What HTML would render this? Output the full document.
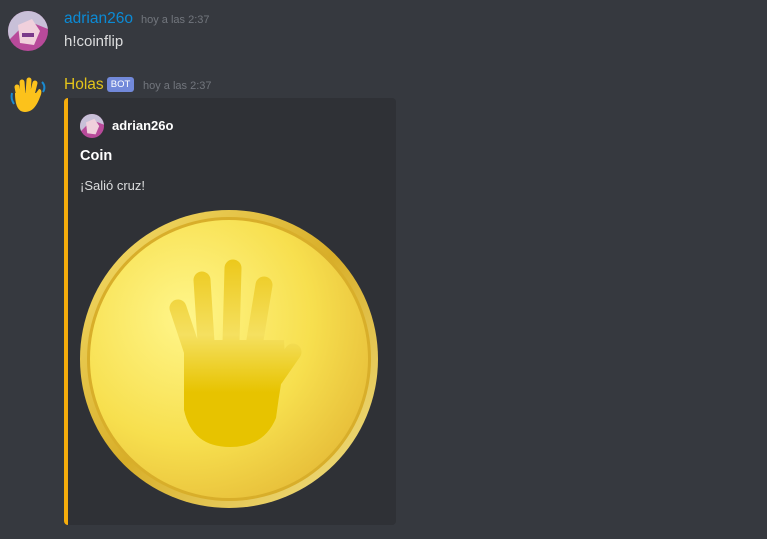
<!DOCTYPE html>
<html><head><meta charset="utf-8"><style>
body{margin:0;width:767px;height:539px;background:#36393f;font-family:"Liberation Sans","DejaVu Sans",sans-serif;position:relative;overflow:hidden}
.a{position:absolute;white-space:nowrap}
</style></head><body>
<svg class="a" style="left:8px;top:11px" width="40" height="40" viewBox="0 0 40 40">
<defs><clipPath id="c"><circle cx="20" cy="20" r="20"/></clipPath></defs>
<g clip-path="url(#c)"><rect width="40" height="40" fill="#b84a9a"/><path d="M0 0H40V18L20 10 8 22 0 30Z" fill="#c8c0d8"/><path d="M10 14 24 8 32 20 26 34 12 32Z" fill="#f0d0dc"/><path d="M14 22h12v4H14z" fill="#7a3a8a"/><path d="M0 30 10 40H0Z" fill="#8a2a7a"/></g></svg>
<div class="a" style="left:64px;top:10px;font-size:15.5px;color:#0b8bd6">adrian26o</div>
<div class="a" style="left:141px;top:14px;font-size:11px;color:#72767d">hoy a las 2:37</div>
<div class="a" style="left:64px;top:33px;font-size:15px;color:#dcddde">h!coinflip</div>

<svg class="a" style="left:9px;top:77px" width="40" height="38" viewBox="0 0 40 38">
<g fill="#fcc21b" stroke="#fcc21b" stroke-linecap="round">
<path d="M10 20 L8 10 M14 18 L13 5 M19 17 L20 3 M23 18 L26 6" stroke-width="5" fill="none"/>
<path d="M6 16 L27 16 L30 12 C33 12 33 16 31 20 C28 28 24 35 16 35 C9 35 6 28 6 16Z" stroke="none"/>
</g>
<path d="M3 16 C2 20 3 24 5 27" stroke="#1a8ad0" stroke-width="2" fill="none"/>
<path d="M33 5 C36 8 36 12 34 15" stroke="#1a8ad0" stroke-width="2" fill="none"/></svg>
<div class="a" style="left:64px;top:76px;font-size:15.5px;color:#e3c41a">Holas</div>
<div class="a" style="left:107px;top:77px;width:27px;height:15px;background:#7289da;border-radius:3px;color:#fff;font-size:9.5px;line-height:15px;text-align:center">BOT</div>
<div class="a" style="left:143px;top:80px;font-size:11px;color:#72767d">hoy a las 2:37</div>

<div class="a" style="left:64px;top:98px;width:332px;height:427px;background:#2f3136;border-left:4px solid #f6ad0c;border-radius:4px;box-sizing:border-box"></div>
<svg class="a" style="left:80px;top:114px" width="24" height="24" viewBox="0 0 40 40">
<g clip-path="url(#c)"><rect width="40" height="40" fill="#b84a9a"/><path d="M0 0H40V18L20 10 8 22 0 30Z" fill="#c8c0d8"/><path d="M10 14 24 8 32 20 26 34 12 32Z" fill="#f0d0dc"/></g></svg>
<div class="a" style="left:112px;top:118px;font-size:13px;font-weight:bold;color:#fff">adrian26o</div>
<div class="a" style="left:80px;top:148px;font-size:14.5px;font-weight:bold;color:#fff">Coin</div>
<div class="a" style="left:80px;top:178px;font-size:13px;color:#dcddde">¡Salió cruz!</div>

<svg class="a" style="left:0;top:0" width="767" height="539">
<defs>
<radialGradient id="g1" cx="0.35" cy="0.35" r="0.75"><stop offset="0" stop-color="#fff68a"/><stop offset="0.6" stop-color="#f7df4e"/><stop offset="1" stop-color="#e6bc38"/></radialGradient>
<linearGradient id="g2" x1="0" y1="0" x2="1" y2="1"><stop offset="0" stop-color="#f6e070"/><stop offset="0.5" stop-color="#d8ae28"/><stop offset="1" stop-color="#f3e48a"/></linearGradient>
<linearGradient id="h" gradientUnits="userSpaceOnUse" x1="0" y1="258" x2="0" y2="450"><stop offset="0" stop-color="#ecc81a"/><stop offset="0.4" stop-color="#f5e060"/><stop offset="0.7" stop-color="#e7c300"/><stop offset="1" stop-color="#e7c300"/></linearGradient>
</defs>
<circle cx="229" cy="359" r="149" fill="url(#g2)"/>
<circle cx="229" cy="359" r="142" fill="#d8ae2a"/>
<circle cx="229" cy="359" r="139" fill="url(#g1)"/>
<g fill="url(#h)" stroke="url(#h)" stroke-linecap="round" stroke-linejoin="round">
<path d="M178 308 L192 350 M202 280 L206 342 M233 268 L231 342 M264 285 L254 346 M293 352 L275 378" stroke-width="17" fill="none"/>
<path d="M184 340 L284 340 L286 372 L283 372 Q279 395 276 418 Q264 447 230 447 Q192 447 184 410 Z" stroke="none"/>
</g>
</svg>
</body></html>
